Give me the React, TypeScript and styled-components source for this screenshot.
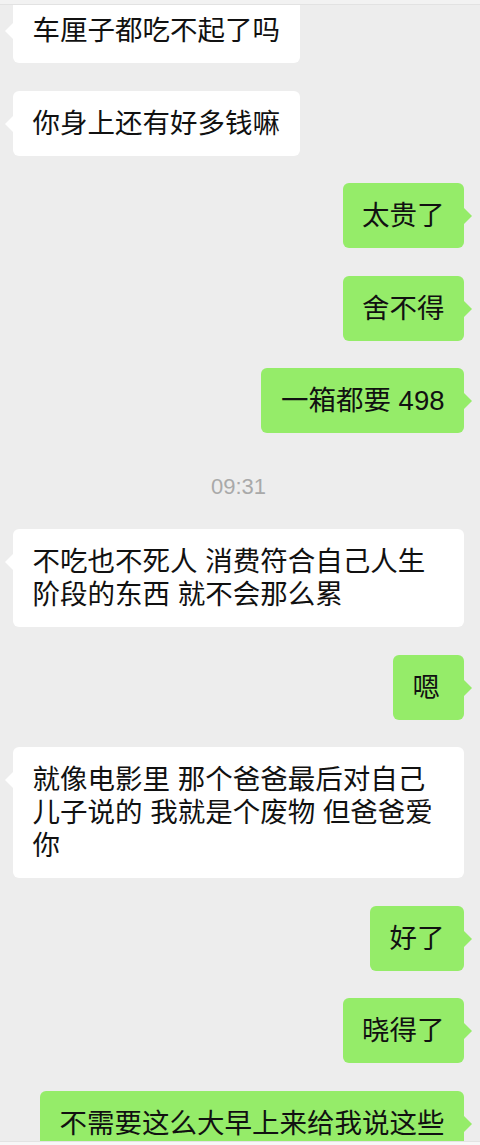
import React from "react";
import styled, { createGlobalStyle, css } from "styled-components";

const Global = createGlobalStyle`
  html, body { margin: 0; padding: 0; background: #ededed; }
  * { box-sizing: border-box; }
`;

const Screen = styled.div`
  width: 480px;
  height: 1145px;
  display: flex;
  flex-direction: column;
  background: #ededed;
  overflow: hidden;
  font-family: "Liberation Sans", "Noto Sans CJK SC", sans-serif;
`;

const TopBar = styled.div`
  flex: 0 0 5px;
  background: #f2f2f2;
  border-bottom: 1px solid #e2e2e2;
  position: relative;
  z-index: 2;
`;

const BottomBar = styled.div`
  flex: 0 0 4px;
  background: #f7f7f7;
  border-top: 1px solid #e3e3e3;
  position: relative;
  z-index: 2;
`;

const Messages = styled.div`
  flex: 1;
  overflow: hidden;
  padding: 0 16px 0 13px;
`;

const List = styled.div`
  display: flex;
  flex-direction: column;
  gap: 27.5px;
  margin-top: -7px;
`;

const Row = styled.div<{ $mine?: boolean }>`
  display: flex;
  justify-content: ${(p) => (p.$mine ? "flex-end" : "flex-start")};
`;

const Bubble = styled.div<{ $mine?: boolean }>`
  position: relative;
  max-width: 452px;
  min-width: 71px;
  padding: 16px 19.5px;
  border-radius: 6px;
  font-size: 27.5px;
  line-height: 33px;
  color: #111;
  text-align: left;
  word-break: break-all;
  background: ${(p) => (p.$mine ? "#95ec69" : "#ffffff")};

  &::before {
    content: "";
    position: absolute;
    top: 25px;
    width: 0;
    height: 0;
    border-top: 8px solid transparent;
    border-bottom: 8px solid transparent;
    ${(p) =>
      p.$mine
        ? css`
            right: -8px;
            border-left: 8px solid #95ec69;
          `
        : css`
            left: -8px;
            border-right: 8px solid #ffffff;
          `}
  }
`;

const TimeRow = styled.div`
  padding: 15px 0 4px;
  text-align: center;
  font-size: 22px;
  line-height: 22px;
  color: #a9a9a9;
`;

type Msg = { mine?: boolean; text?: string; time?: string };

const messages: Msg[] = [
  { text: "车厘子都吃不起了吗" },
  { text: "你身上还有好多钱嘛" },
  { mine: true, text: "太贵了" },
  { mine: true, text: "舍不得" },
  { mine: true, text: "一箱都要 498" },
  { time: "09:31" },
  { text: "不吃也不死人 消费符合自己人生阶段的东西 就不会那么累" },
  { mine: true, text: "嗯" },
  { text: "就像电影里 那个爸爸最后对自己儿子说的 我就是个废物 但爸爸爱你" },
  { mine: true, text: "好了" },
  { mine: true, text: "晓得了" },
  { mine: true, text: "不需要这么大早上来给我说这些" },
];

export default function App() {
  return (
    <>
      <Global />
      <Screen>
        <TopBar />
        <Messages>
          <List>
            {messages.map((m, i) =>
              m.time ? (
                <TimeRow key={i}>{m.time}</TimeRow>
              ) : (
                <Row key={i} $mine={m.mine}>
                  <Bubble $mine={m.mine}>{m.text}</Bubble>
                </Row>
              )
            )}
          </List>
        </Messages>
        <BottomBar />
      </Screen>
    </>
  );
}
